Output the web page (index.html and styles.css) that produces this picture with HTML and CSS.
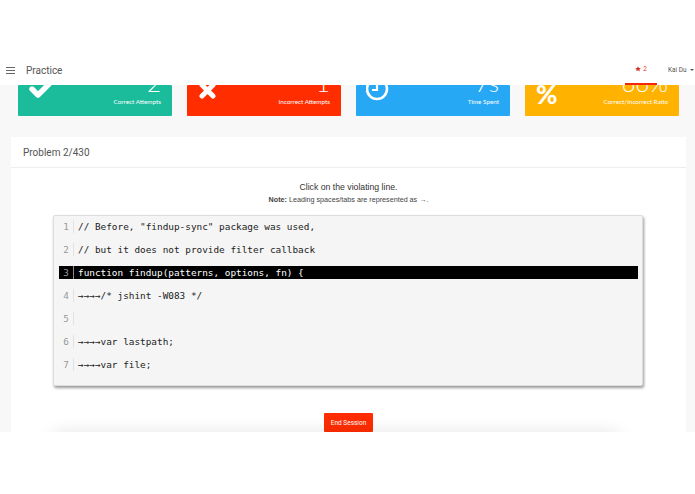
FILE: index.html
```html
<!DOCTYPE html>
<html lang="en">
<head>
<meta charset="utf-8">
<title>Practice</title>
<link rel="stylesheet" href="styles.css">
</head>
<body>
<header class="navbar">
  <div class="nav-left">
    <span class="burger"><i></i><i></i><i></i></span>
    <span class="nav-title">Practice</span>
  </div>
  <div class="nav-right">
    <span class="stars">
      <svg class="star" viewBox="0 0 24 24"><path d="M12 1l3.4 7.2 7.6 1-5.6 5.3 1.5 7.7L12 17.4 5.1 21.2l1.5-7.7L1 9.2l7.6-1z"/></svg>
      <span>2</span>
    </span>
    <span class="user">Kai Du<span class="caret"></span></span>
  </div>
</header>
<main class="content">
  <section class="stats">
    <div class="stat stat-green">
      <svg class="stat-icon" viewBox="0 0 30 30"><path d="M4 4l6 6L21-1" fill="none" stroke="#fff" stroke-width="5.4" stroke-linecap="round" stroke-linejoin="round"/></svg>
      <div class="stat-text"><div class="stat-num">2</div><div class="stat-label">Correct Attempts</div></div>
    </div>
    <div class="stat stat-red">
      <svg class="stat-icon" viewBox="0 0 30 30"><path d="M5 0l11 11M16 0L5 11" fill="none" stroke="#fff" stroke-width="5" stroke-linecap="round"/></svg>
      <div class="stat-text"><div class="stat-num">1</div><div class="stat-label">Incorrect Attempts</div></div>
    </div>
    <div class="stat stat-blue">
      <svg class="stat-icon" viewBox="0 0 30 30"><circle cx="11" cy="4" r="10" fill="none" stroke="#fff" stroke-width="2.6"/><path d="M11 0v5H6" fill="none" stroke="#fff" stroke-width="2.2"/></svg>
      <div class="stat-text"><div class="stat-num">7s</div><div class="stat-label">Time Spent</div></div>
    </div>
    <div class="stat stat-amber">
      <span class="stat-percent">%</span>
      <div class="stat-text"><div class="stat-num">66%</div><div class="stat-label">Correct/Incorrect Ratio</div></div>
    </div>
  </section>
  <section class="card">
    <div class="card-head">Problem 2/430</div>
    <div class="card-body">
      <p class="prompt">Click on the violating line.</p>
      <p class="note"><b>Note:</b> Leading spaces/tabs are represented as →.</p>
      <div class="code">
        <div class="line"><span class="num">1</span><span class="src">// Before, "findup-sync" package was used,</span></div>
        <div class="line"><span class="num">2</span><span class="src">// but it does not provide filter callback</span></div>
        <div class="line active"><span class="num">3</span><span class="src">function findup(patterns, options, fn) {</span></div>
        <div class="line"><span class="num">4</span><span class="src">→→→→/* jshint -W083 */</span></div>
        <div class="line"><span class="num">5</span><span class="src"></span></div>
        <div class="line"><span class="num">6</span><span class="src">→→→→var lastpath;</span></div>
        <div class="line"><span class="num">7</span><span class="src">→→→→var file;</span></div>
      </div>
      <div class="actions"><button class="end">End Session</button></div>
      <div class="next-panel"></div>
    </div>
  </section>
</main>
</body>
</html>
```
FILE: styles.css
```css
* { box-sizing: border-box; }
html, body { margin: 0; padding: 0; background: #fff; }
body { height: 494px; overflow: hidden; font-family: "Liberation Sans", Arial, sans-serif; }
.navbar {
  height: 85px;
  padding: 55px 0 0 6px;
  display: flex;
  justify-content: space-between;
  align-items: center;
  background: #fff;
  font-family: Roboto, sans-serif;
}
.nav-left { display: flex; align-items: center; gap: 11px; }
.burger { width: 9px; display: flex; flex-direction: column; gap: 2px; }
.burger i { display: block; height: 1px; background: #666; }
.nav-title { font-size: 10px; color: #555; }
.nav-right { display: flex; align-items: center; height: 30px; }
.stars {
  width: 32px;
  height: 30px;
  display: flex;
  justify-content: center;
  align-items: center;
  gap: 2px;
  color: #e53935;
  font-size: 6.5px;
  border-bottom: 2px solid #f4270a;
  margin-right: 11px;
}
.star { width: 6px; height: 6px; fill: #d32f2f; }
.user { width: 27px; font-size: 6.5px; color: #555; white-space: nowrap; display: flex; align-items: center; gap: 3px; }
.caret { border: 2px solid transparent; border-top-color: #555; border-bottom: 0; }
.content {
  height: 347px;
  overflow: hidden;
  background: #f8f8f8;
  padding: 0 9px 0 11px;
}
.stats {
  display: grid;
  grid-template-columns: repeat(4, 154px);
  justify-content: space-between;
  height: 31px;
  margin: 0 7px 21px;
  font-family: Lato, sans-serif;
  color: #fff;
}
.stat {
  height: 31px;
  overflow: hidden;
  position: relative;
  display: flex;
  justify-content: space-between;
  align-items: flex-end;
  padding: 0 11px 8px 12px;
  border-radius: 1px;
}
.stat-green { background: #1abc9c; }
.stat-red { background: #ff2d00; }
.stat-blue { background: #26a8f5; }
.stat-amber { background: #ffb300; }
.stat-icon { width: 30px; height: 30px; position: absolute; left: 10px; top: 0; }
.stat-percent { position: absolute; left: 11px; top: -3px; font-size: 26px; line-height: 24px; font-weight: 900; }
.stat-text { margin-left: auto; text-align: right; }
.stat-num { font-size: 24px; line-height: 24px; margin-top: -24px; font-weight: 300; height: 11px; display: flex; align-items: flex-end; justify-content: flex-end; }
.stat-label { font-size: 6.3px; line-height: 8px; margin-top: 3px; white-space: nowrap; }
.card { background: #fff; height: 295px; }
.card-head {
  height: 31px;
  padding: 0 12px;
  display: flex;
  align-items: center;
  font: 10px Roboto, sans-serif;
  color: #555;
  border-bottom: 1px solid #eee;
}
.card-body { display: flex; flex-direction: column; align-items: center; }
.prompt { margin: 13px 0 0; font-size: 8.7px; line-height: 12px; color: #333; }
.note { margin: 2px 0 0; font-size: 7.2px; line-height: 9px; color: #444; }
.code {
  width: 590px;
  height: 171px;
  margin: 11px 0 0 -1px;
  padding: 4px 5px 0;
  background: #f5f5f5;
  border: 1px solid #ddd;
  border-radius: 2px;
  box-shadow: 1px 2px 3px rgba(0,0,0,.4);
  font-family: "DejaVu Sans Mono", monospace;
  font-size: 9.4px;
  color: #222;
}
.line { height: 13px; margin-bottom: 10px; display: flex; align-items: center; }
.line.active { margin-right: -1px; }
.num { width: 15px; height: 13px; line-height: 13px; padding-right: 4px; text-align: right; color: #999; border-right: 1px solid #e3e3e3; flex: none; }
.src { padding-left: 4px; white-space: pre; }
.active { background: #000; color: #fff; }
.active .num { color: #999; border-right-color: #888; }
.actions { margin: 27px 0 0; }
.end {
  display: block;
  width: 49px;
  height: 19px;
  padding: 0;
  border: 0;
  border-radius: 1px;
  background: #ff2d00;
  color: #fff;
  font: 6.5px Roboto, sans-serif;
}
.next-panel {
  width: 565px;
  height: 40px;
  margin-left: -24px;
  flex: none;
  background: #fff;
  box-shadow: 0 0 18px rgba(0,0,0,.1);
}
```
